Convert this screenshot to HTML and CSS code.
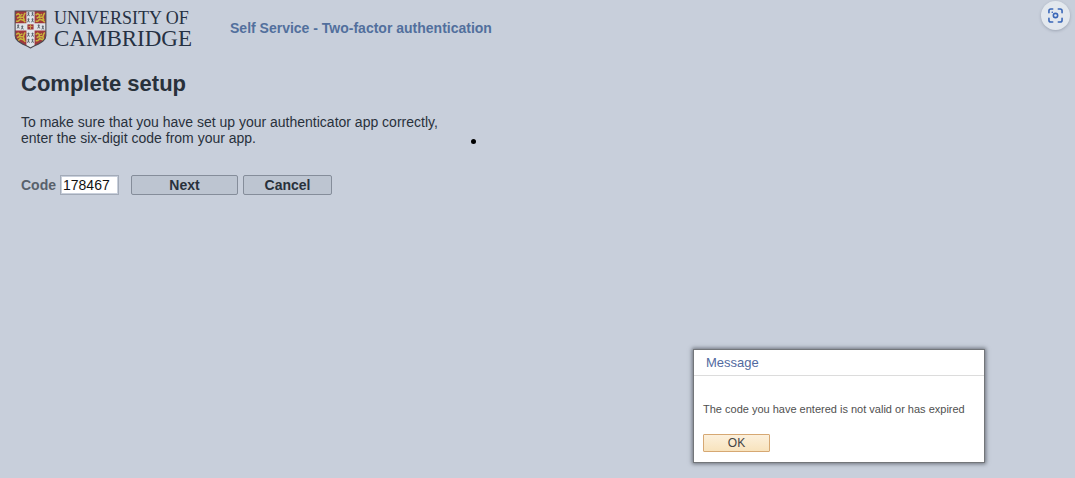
FILE: index.html
```html
<!DOCTYPE html>
<html lang="en">
<head>
    <meta charset="UTF-8">
    <title>Self Service - Two-factor authentication</title>
    <meta name="viewport" content="width=device-width, initial-scale=1.0">
    <link rel="stylesheet" href="styles.css">
</head>
<body>
<header class="header">
    <div class="logo">
        <svg class="shield" viewBox="0 0 32 38" aria-hidden="true">
            <defs>
                <clipPath id="shieldShape">
                    <path d="M1 1H31V25C31 31 23 33 16 37C9 33 1 31 1 25Z"/>
                </clipPath>
                <g id="lion" fill="none" stroke="#c9b53c" stroke-width="1.5">
                    <path d="M1 3L3 1.500L5 3L4 5L8 5L9 2L10 1M2 6L4 5M3 9L5 7L8 8L10 10M8 5L9 8M1 9L3 9M6 2L7 3"/>
                </g>
                <path id="ermine" d="M0 -2V1M-1 2L0 0L1 2M-1 -1H1" fill="none" stroke="#555b64" stroke-width="0.8"/>
            </defs>
            <g clip-path="url(#shieldShape)">
                <rect width="32" height="38" fill="#a0383c"/>
                <use href="#lion" x="1" y="2"/>
                <use href="#lion" x="20" y="2"/>
                <use href="#lion" x="1" y="21"/>
                <use href="#lion" x="20" y="21"/>
                <path d="M12 0H20V13H32V20H20V38H12V20H0V13H12Z" fill="#dfe3e8"/>
                <use href="#ermine" x="14" y="4"/>
                <use href="#ermine" x="18" y="4"/>
                <use href="#ermine" x="14" y="10"/>
                <use href="#ermine" x="18" y="10"/>
                <use href="#ermine" x="4" y="16"/>
                <use href="#ermine" x="8" y="17"/>
                <use href="#ermine" x="24" y="16"/>
                <use href="#ermine" x="28" y="17"/>
                <use href="#ermine" x="14" y="24"/>
                <use href="#ermine" x="18" y="24"/>
                <use href="#ermine" x="14" y="30"/>
                <use href="#ermine" x="18" y="30"/>
                <rect x="13" y="14" width="6" height="5" fill="#a0383c"/>
                <path d="M16 14V19M14 16H18" stroke="#c99b52" stroke-width="1"/>
            </g>
            <path d="M1 1H31V25C31 31 23 33 16 37C9 33 1 31 1 25Z" fill="none" stroke="#4c4a50" stroke-width="1"/>
        </svg>
        <div class="logo-text">
            <span class="logo-top">UNIVERSITY OF</span>
            <span class="logo-bottom">CAMBRIDGE</span>
        </div>
    </div>
    <div class="service">Self Service - Two-factor authentication</div>
    <button type="button" class="capture" aria-label="Visual search">
        <svg viewBox="0 0 16 16" fill="none" stroke="#3a67b8" stroke-width="1.7" stroke-linecap="round">
            <path d="M1 5V3Q1 1 3 1H5M11 1H13Q15 1 15 3V5M15 11V13Q15 15 13 15H11M5 15H3Q1 15 1 13V11"/>
            <circle cx="8" cy="8" r="2.300"/>
            <path d="M4.500 4.500H4.600"/>
        </svg>
    </button>
</header>

<main class="content">
    <h1>Complete setup</h1>
    <p class="intro">To make sure that you have set up your authenticator app correctly,<br>enter the six-digit code from your app.</p>
    <form class="code-form">
        <label for="code">Code</label>
        <input type="text" id="code" value="178467" maxlength="6" autocomplete="off">
        <button type="button" class="btn next">Next</button>
        <button type="button" class="btn cancel">Cancel</button>
    </form>
</main>

<span class="dot"></span>

<div class="dialog" role="alertdialog" aria-labelledby="dialogTitle" aria-describedby="dialogText">
    <h2 id="dialogTitle">Message</h2>
    <div class="dialog-body">
        <p id="dialogText">The code you have entered is not valid or has expired</p>
        <button type="button" class="ok">OK</button>
    </div>
</div>
</body>
</html>
```
FILE: styles.css
```css
html, body {
    height: 100%;
    margin: 0;
}
body {
    position: relative;
    background: #c8cfdb;
    color: #29313b;
    font-family: "Liberation Sans", Arial, sans-serif;
}
button, input {
    box-sizing: border-box;
    font-family: inherit;
}
.header {
    display: flex;
    align-items: flex-start;
    padding: 0 5px 0 14px;
}
.logo {
    display: flex;
    align-items: center;
    gap: 7px;
    padding-top: 8px;
}
.shield {
    width: 33px;
    height: 39px;
}
.logo-text {
    display: flex;
    flex-direction: column;
    color: #263143;
    font-family: "Liberation Serif", serif;
    white-space: nowrap;
}
.logo-top {
    font-size: 18px;
    line-height: 20px;
}
.logo-bottom {
    font-size: 23px;
    line-height: 22px;
}
.service {
    flex: 1;
    margin-left: 38px;
    padding-top: 20px;
    color: #526f9d;
    font-size: 14px;
    font-weight: bold;
    line-height: 16px;
}
.capture {
    display: flex;
    align-items: center;
    justify-content: center;
    width: 29px;
    height: 29px;
    margin-top: 1px;
    padding: 0;
    border: 0;
    border-radius: 50%;
    background: #e3e8ee;
    box-shadow: 0 1px 3px rgba(60, 70, 90, 0.3);
}
.capture svg {
    width: 15px;
    height: 15px;
}
.content {
    padding: 0 21px;
}
h1 {
    margin: 22px 0 18px;
    font-size: 22px;
    line-height: 24px;
}
.intro {
    margin: 0;
    font-size: 14px;
    line-height: 16px;
}
.code-form {
    display: flex;
    align-items: center;
    margin-top: 29px;
}
.code-form label {
    margin-right: 4px;
    color: #58616c;
    font-size: 14px;
    font-weight: bold;
}
.code-form input {
    width: 59px;
    height: 20px;
    margin-right: 12px;
    padding: 0 2px;
    border: 1px solid #a3abb8;
    outline: 1px solid #c8cfdb;
    outline-offset: -2px;
    background: #fff;
    color: #111;
    font-size: 14px;
}
.btn {
    height: 20px;
    padding: 0;
    border: 1px solid #858d9a;
    border-radius: 2px;
    background: #bdc5d1;
    color: #29313b;
    font-size: 14px;
    font-weight: bold;
}
.next {
    width: 107px;
    margin-right: 5px;
}
.cancel {
    width: 89px;
}
.dot {
    position: absolute;
    top: 139px;
    left: 471px;
    width: 5px;
    height: 5px;
    border-radius: 50%;
    background: #000;
}
.dialog {
    position: absolute;
    right: 90px;
    bottom: 15px;
    width: 292px;
    border: 1px solid #73767a;
    box-sizing: border-box;
    background: #fff;
    box-shadow: 0 0 4px 1px #6a707a;
}
.dialog h2 {
    margin: 0;
    padding: 5px 12px 4px;
    border-bottom: 1px solid #dcdcdc;
    color: #526aa0;
    font-size: 13px;
    font-weight: normal;
    line-height: 16px;
}
.dialog-body {
    padding: 26px 9px 10px;
}
.dialog-body p {
    margin: 0 0 18px;
    color: #505050;
    font-size: 11px;
    line-height: 14px;
}
.ok {
    display: block;
    width: 67px;
    height: 18px;
    padding: 0;
    border: 1px solid #d6a873;
    border-radius: 1px;
    background: linear-gradient(#fcf0dc, #f8e3bd);
    color: #444;
    font-size: 12px;
}
```
